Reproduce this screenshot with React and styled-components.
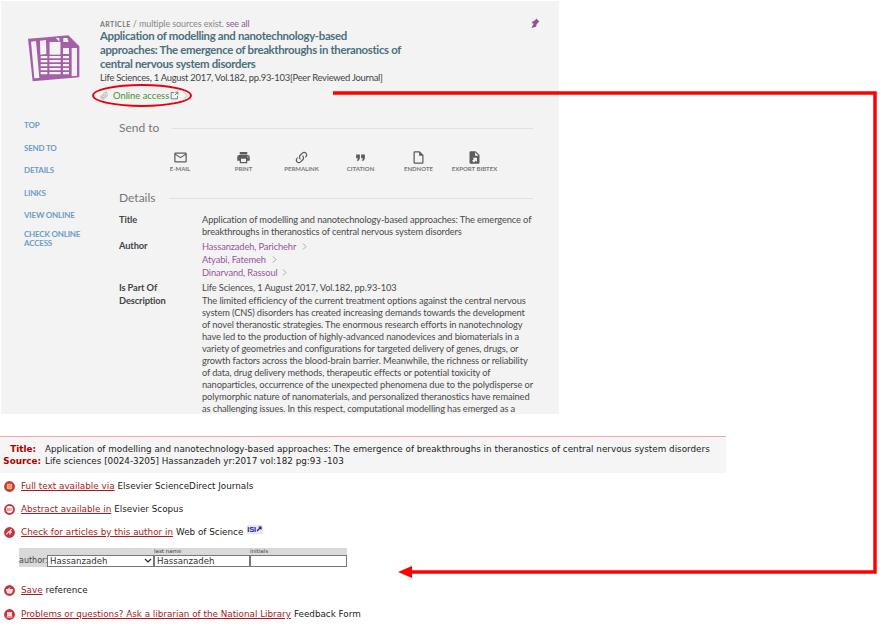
import React from 'react';
import styled, { createGlobalStyle } from 'styled-components';

const Global = createGlobalStyle`
  html, body { margin: 0; padding: 0; background: #fff; }
  body { font-family: "Lato", "Noto Sans", sans-serif; width: 884px; height: 629px; overflow: hidden; position: relative; }
`;
const Panel = styled.section`
  width: 558px; height: 413px; margin: 1px 0 0 1px; background: #f3f3f3; overflow: hidden;
  display: flex; flex-direction: column;
`;
const Header = styled.header`
  display: flex; box-sizing: border-box; padding: 18px 0 0 19px; height: 100px; flex: none; position: relative;
`;
const Cover = styled.svg`width: 70px; height: 60px; margin-top: 9px; flex: none;`;
const HeadText = styled.div`margin-left: 10px; width: 306px;`;
const Kind = styled.div`font-size: 9px; line-height: 10px; color: #888; letter-spacing: -.1px; white-space: nowrap;`;
const KindTag = styled.span`font-size: 7px; letter-spacing: .4px; font-weight: 700; color: #777;`;
const SeeAll = styled.span`color: #96569a;`;
const Title = styled.h1`margin: 0; font-size: 11.4px; line-height: 14px; font-weight: 700; color: #4d6f7c; letter-spacing: -.33px;`;
const Journal = styled.div`font-size: 9.4px; line-height: 13px; color: #444; white-space: nowrap; letter-spacing: -.25px;`;
const Access = styled.div`display: flex; align-items: center; gap: 4px; margin-top: 5px; height: 12px; font-size: 9.4px; color: #3f9232;`;
const Pin = styled.svg`position: absolute; left: 529px; top: 16px; width: 10px; height: 12px;`;
const Body = styled.div`display: flex; flex: 1; min-height: 0;`;
const Side = styled.nav`width: 118px; flex: none; padding: 20px 0 0 23px; box-sizing: border-box; display: flex; flex-direction: column;`;
const SideLink = styled.a`font-size: 8px; line-height: 9px; color: #6e9cc6; font-weight: 700; letter-spacing: -.2px; margin-bottom: ${p => p.$gap}px; width: 72px;`;
const Main = styled.main`flex: 1; padding: 19px 26px 0 0; min-width: 0;`;
const SectionHead = styled.div`display: flex; align-items: center; gap: 13px; font-size: 12px; line-height: 16px; color: #777;`;
const Rule = styled.span`flex: 1; height: 1px; background: #e0e0e0;`;
const Actions = styled.div`display: flex; padding-left: 31px; margin-top: 14px; height: 40px;`;
const Action = styled.div`width: ${p => p.$w}px; display: flex; flex-direction: column; align-items: center; flex: none;`;
const ActionIcon = styled.svg`width: 15px; height: 15px; fill: #5c5c5c; display: block;`;
const ActionLabel = styled.span`font-size: 6px; line-height: 8px; font-weight: 700; color: #777; white-space: nowrap;`;
const Rows = styled.div`margin-top: 8px; display: grid; grid-template-columns: 83px 1fr; font-size: 9.3px; line-height: 12px; color: #4a4a4a; letter-spacing: -.12px;`;
const Label = styled.div`font-weight: 700; color: #444; margin-top: ${p => p.$mt || 0}px;`;
const Value = styled.div`margin-top: ${p => p.$mt || 0}px;`;
const DescLine = styled.div`white-space: nowrap;`;
const Author = styled.div`color: #96569a; line-height: 13px; display: flex; align-items: center;`;
const Chev = styled.svg`width: 5px; height: 7px; margin-left: ${p => p.$gap}px; fill: none; stroke: #aaa; stroke-width: 1;`;
const Lower = styled.section`width: 726px; margin-top: 22px;`;
const Citation = styled.div`
  border-top: 1px solid #e8a8ac; background: #f5f5f5; height: 37px; box-sizing: border-box; padding-top: 6px;
  display: grid; grid-template-columns: 41px 1fr; grid-auto-rows: 12px; column-gap: 4px; font: 8.8px/12px "DejaVu Sans", Verdana, sans-serif; color: #222; white-space: nowrap;
`;
const CiteLabel = styled.b`color: #a00; text-align: right; padding-right: ${p => p.$inset || 0}px;`;
const Line = styled.div`
  display: flex; align-items: center; gap: 3px; margin-top: ${p => p.$mt}px; padding-left: 4px; height: 12px;
  font: 8.8px/12px "DejaVu Sans", Verdana, sans-serif; color: #222; white-space: nowrap;
`;
const RedLink = styled.a`color: #a51c22; text-decoration: underline;`;
const Bullet = styled.svg`width: 11px; height: 11px; flex: none; margin-right: 3px;`;
const Isi = styled.span`
  display: inline-flex; align-items: center; width: 16px; height: 9px; font: 700 7.5px/9px "Liberation Sans", sans-serif; color: #1c1c9c;
  background: #e8e8ee; margin-left: 1px; position: relative; top: -3px; letter-spacing: -.2px;
`;
const AuthorForm = styled.div`
  margin: 10px 0 0 19px; width: 328px; height: 19px; background: #d9d9d9; display: grid;
  grid-template-columns: 28px 107px 96px 97px; grid-template-rows: 7px 12px;
  font: 8.8px/12px "DejaVu Sans", Verdana, sans-serif; color: #333;
`;
const Tiny = styled.span`font-size: 5.5px; line-height: 7px; color: #444; grid-row: 1; grid-column: ${p => p.$c};`;
const FormLabel = styled.span`grid-row: 2; grid-column: 1; color: #444; font-size: 8px;`;
const Field = styled.div`
  grid-row: 2; grid-column: ${p => p.$c}; background: #fff; border: 1px solid #777; box-sizing: border-box; height: 12px;
  display: flex; align-items: center; justify-content: space-between; padding: 0 1px 0 2px; font-size: 8.6px; color: #333; overflow: hidden;
`;
const Overlay = styled.svg`position: absolute; left: 0; top: 0; width: 884px; height: 629px; pointer-events: none;`;

const Ic = ({ d }) => <ActionIcon viewBox="0 0 24 24"><path d={d} /></ActionIcon>;
const icons = [
  ['E-MAIL', 60, 'M20 4H4a2 2 0 0 0-2 2v12a2 2 0 0 0 2 2h16a2 2 0 0 0 2-2V6a2 2 0 0 0-2-2zm0 14H4V8l8 5 8-5zm-8-7L4 6h16z'],
  ['PRINT', 67, 'M18,3H6V7H18M19,12A1,1 0 0,1 18,11A1,1 0 0,1 19,10A1,1 0 0,1 20,11A1,1 0 0,1 19,12M16,19H8V14H16M19,8H5A3,3 0 0,0 2,11V17H6V21H18V17H22V11A3,3 0 0,0 19,8Z'],
  ['PERMALINK', 49, 'M10.59,13.41C11,13.8 11,14.44 10.59,14.83C10.2,15.22 9.56,15.22 9.17,14.83C7.22,12.88 7.22,9.71 9.17,7.76V7.76L12.71,4.22C14.66,2.27 17.83,2.27 19.78,4.22C21.73,6.17 21.73,9.34 19.78,11.29L18.29,12.78C18.3,11.96 18.17,11.14 17.89,10.36L18.36,9.88C19.54,8.71 19.54,6.81 18.36,5.64C17.19,4.46 15.29,4.46 14.12,5.64L10.59,9.17C9.41,10.34 9.41,12.24 10.59,13.41M13.41,9.17C13.8,8.78 14.44,8.78 14.83,9.17C16.78,11.12 16.78,14.29 14.83,16.24V16.24L11.29,19.78C9.34,21.73 6.17,21.73 4.22,19.78C2.27,17.83 2.27,14.66 4.22,12.71L5.71,11.22C5.7,12.04 5.83,12.86 6.11,13.65L5.64,14.12C4.46,15.29 4.46,17.19 5.64,18.36C6.81,19.54 8.71,19.54 9.88,18.36L13.41,14.83C14.59,13.66 14.59,11.76 13.41,10.59C13,10.2 13,9.56 13.41,9.17Z'],
  ['CITATION', 69, 'M14,17H17L19,13V7H13V13H16M6,17H9L11,13V7H5V13H8L6,17Z'],
  ['ENDNOTE', 47, 'M14,2H6A2,2 0 0,0 4,4V20A2,2 0 0,0 6,22H18A2,2 0 0,0 20,20V8L14,2M18,20H6V4H13V9H18V20Z'],
  ['EXPORT BIBTEX', 65, 'M6,2C4.89,2 4,2.9 4,4V20A2,2 0 0,0 6,22H18A2,2 0 0,0 20,20V8L14,2M13,3.5L18.5,9H13M8.93,12.22H16V19.29L13.88,17.17L11.05,20L8.22,17.17L11.05,14.35'],
];
const desc = [
  'The limited efficiency of the current treatment options against the central nervous',
  'system (CNS) disorders has created increasing demands towards the development',
  'of novel theranostic strategies. The enormous research efforts in nanotechnology',
  'have led to the production of highly-advanced nanodevices and biomaterials in a',
  'variety of geometries and configurations for targeted delivery of genes, drugs, or',
  'growth factors across the blood-brain barrier. Meanwhile, the richness or reliability',
  'of data, drug delivery methods, therapeutic effects or potential toxicity of',
  'nanoparticles, occurrence of the unexpected phenomena due to the polydisperse or',
  'polymorphic nature of nanomaterials, and personalized theranostics have remained',
  'as challenging issues. In this respect, computational modelling has emerged as a',
];
const glyphs = {
  full: <g><rect x="2.8" y="2.8" width="5.4" height="5.4" rx=".6" fill="#f4b070" /><path d="M4 4.500h3M4 6.200h3" stroke="#e07a40" strokeWidth=".7" /></g>,
  abs: <g><circle cx="5.5" cy="5.5" r="3.4" fill="#fff" /><path d="M3.8 4v3M5.2 4v3M7 4v3" stroke="#c8383c" strokeWidth=".8" /></g>,
  check: <path d="M2.5 7.500c1-2 1.500-3 3-3M6 7.500V4c0-1 1-1.500 2-1.500M5 5h3" stroke="#fff" strokeWidth="1.100" fill="none" />,
  save: <path d="M2.500 4.500h6L7.500 8h-4zM4 4.500 6 2.500" stroke="#fff" strokeWidth="1" fill="#f8dcdc" />,
  help: <g><rect x="3" y="3" width="5" height="4" fill="#f0d8d8" /><rect x="2.500" y="7.500" width="6" height="1" fill="#fff" /></g>,
};
const BulletIcon = ({ kind }) => (
  <Bullet viewBox="0 0 11 11">
    <circle cx="5.5" cy="5.5" r="5.4" fill="#c4343a" />
    {glyphs[kind]}
  </Bullet>
);

export default function App() {
  return (
    <>
      <Global />
      <Panel>
        <Header>
          <Cover viewBox="0 0 210 180">
            <path d="M24 32 80 28 145 22 178 55 178 148 38 160Z" fill="#a55fa6" />
            <g fill="#f3f3f3">
              <path d="M33 41 48 39 58 150 43 151Z" />
              <path d="M60 38 78 36 79 78 61 80Z" />
              <path d="M88 42 104 42 122 42 122 80 88 80Z" />
              <path d="M107 29 118 30 118 41Z" />
              <path d="M130 30 142 30 146 42 130 42Z" />
              <path d="M129 60 147 60 147 78 129 78Z" />
              <path d="M155 60 171 60 171 143 155 145Z" />
              <path d="M62 84H147V91H62ZM62 96H147V103H62ZM62 108H147V115H62ZM62 120H147V127H62ZM62 132H147V139H62Z" />
            </g>
            <path d="M82 36H88V150H82ZM122 36H129V150H122Z" fill="#a55fa6" />
          </Cover>
          <HeadText>
            <Kind><KindTag>ARTICLE</KindTag> / multiple sources exist. <SeeAll>see all</SeeAll></Kind>
            <Title>Application of modelling and nanotechnology-based approaches: The emergence of breakthroughs in theranostics of central nervous system disorders</Title>
            <Journal>Life Sciences, 1 August 2017, Vol.182, pp.93-103[Peer Reviewed Journal]</Journal>
            <Access>
              <svg width="9" height="9" viewBox="0 0 24 24" fill="none" stroke="#aaa" strokeWidth="2.4"><path d="M21 11 12 20a5 5 0 0 1-8-7l9-9a3.4 3.4 0 0 1 5 5l-9 9a1.700 1.700 0 0 1-2.500-2.500l8-8" /></svg>
              <span>Online access</span>
              <svg width="9" height="9" viewBox="0 0 24 24" fill="none" stroke="#666" strokeWidth="2.2" style={{ marginLeft: -3 }}><path d="M11 4H3v17h17v-8M13 11 21 3M14 3h7v7" /></svg>
              <svg width="5" height="7" viewBox="0 0 5 7" fill="none" stroke="#c8b0c8" strokeWidth="1"><path d="M1 .500 4 3.500 1 6.500" /></svg>
            </Access>
          </HeadText>
          <Pin viewBox="0 0 24 24" fill="#96509a"><path d="M15 1 23 9 20 10 15 17 15 21 3 24 9 14 4 12 6 9 13 5Z" /></Pin>
        </Header>
        <Body>
          <Side>
            <SideLink $gap={14}>TOP</SideLink>
            <SideLink $gap={13}>SEND TO</SideLink>
            <SideLink $gap={14}>DETAILS</SideLink>
            <SideLink $gap={13}>LINKS</SideLink>
            <SideLink $gap={10}>VIEW ONLINE</SideLink>
            <SideLink>CHECK ONLINE ACCESS</SideLink>
          </Side>
          <Main>
            <SectionHead>Send to<Rule /></SectionHead>
            <Actions>
              {icons.map(([l, w, d]) => (
                <Action key={l} $w={w}><Ic d={d} /><ActionLabel>{l}</ActionLabel></Action>
              ))}
            </Actions>
            <SectionHead>Details<Rule /></SectionHead>
            <Rows>
              <Label>Title</Label>
              <Value>Application of modelling and nanotechnology-based approaches: The emergence of breakthroughs in theranostics of central nervous system disorders</Value>
              <Label $mt={2}>Author</Label>
              <Value $mt={2}>
                <Author>Hassanzadeh, Parichehr<Chev $gap={6} viewBox="0 0 5 7"><path d="M1 .5 4 3.500 1 6.500" /></Chev></Author>
                <Author>Atyabi, Fatemeh<Chev $gap={6} viewBox="0 0 5 7"><path d="M1 .5 4 3.500 1 6.500" /></Chev></Author>
                <Author>Dinarvand, Rassoul<Chev $gap={4} viewBox="0 0 5 7"><path d="M1 .5 4 3.500 1 6.500" /></Chev></Author>
              </Value>
              <Label $mt={3}>Is Part Of</Label>
              <Value $mt={3}>Life Sciences, 1 August 2017, Vol.182, pp.93-103</Value>
              <Label $mt={1}>Description</Label>
              <Value $mt={1}>{desc.map(t => <DescLine key={t}>{t}</DescLine>)}</Value>
            </Rows>
          </Main>
        </Body>
      </Panel>
      <Lower>
        <Citation>
          <CiteLabel $inset={5}>Title:</CiteLabel><span>Application of modelling and nanotechnology-based approaches: The emergence of breakthroughs in theranostics of central nervous system disorders</span>
          <CiteLabel>Source:</CiteLabel><span>Life sciences [0024-3205] Hassanzadeh yr:2017 vol:182 pg:93 -103</span>
        </Citation>
        <Line $mt={7}><BulletIcon kind="full" /><RedLink>Full text available via</RedLink> Elsevier ScienceDirect Journals</Line>
        <Line $mt={11}><BulletIcon kind="abs" /><RedLink>Abstract available in</RedLink> Elsevier Scopus</Line>
        <Line $mt={11}><BulletIcon kind="check" /><RedLink>Check for articles by this author in</RedLink> Web of Science
          <Isi>ISI<svg width="6" height="6" viewBox="0 0 6 6" fill="none" stroke="#1c1c9c" strokeWidth="1.200"><path d="M1 5 5 1M2.500 1H5V3.500" /></svg></Isi>
        </Line>
        <AuthorForm>
          <Tiny $c={3}>last name</Tiny><Tiny $c={4}>initials</Tiny>
          <FormLabel>author:</FormLabel>
          <Field $c={2}>Hassanzadeh<svg width="8" height="6" viewBox="0 0 8 6" fill="none" stroke="#222" strokeWidth="1.200"><path d="M1 1 4 4 7 1" /></svg></Field>
          <Field $c={3}>Hassanzadeh</Field>
          <Field $c={4} />
        </AuthorForm>
        <Line $mt={17}><BulletIcon kind="save" /><RedLink>Save</RedLink> reference</Line>
        <Line $mt={12}><BulletIcon kind="help" /><RedLink>Problems or questions? Ask a librarian of the National Library</RedLink> Feedback Form</Line>
      </Lower>
      <Overlay viewBox="0 0 884 629">
        <ellipse cx="142" cy="95.500" rx="49" ry="10.500" fill="none" stroke="#e8000c" strokeWidth="1.800" />
        <path d="M333 93H875V572H410" fill="none" stroke="#f00" strokeWidth="3.500" />
        <path d="M398 572 412 566V578Z" fill="#f00" />
      </Overlay>
    </>
  );
}
